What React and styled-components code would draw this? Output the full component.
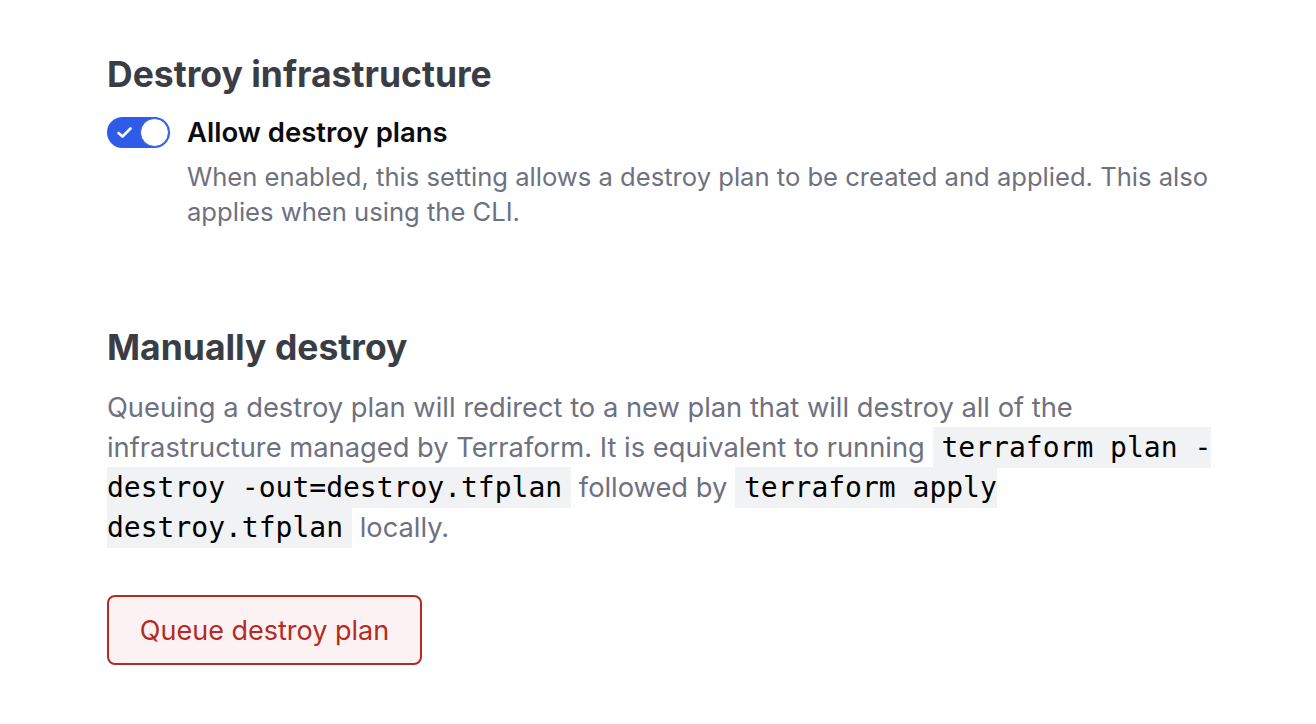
import React from "react";
import styled, { createGlobalStyle } from "styled-components";

const Global = createGlobalStyle`
  body {
    margin: 0;
    background: #fff;
    font-family: Inter, "Noto Sans", sans-serif;
  }
`;

const Page = styled.div`
  padding: 51px 0 0 107px;
  width: 1106px;
`;

const Heading = styled.h2`
  margin: 0;
  font-size: 35.5px;
  line-height: 48px;
  font-weight: 700;
  color: #3b3d45;
`;

const ToggleRow = styled.div`
  display: flex;
  gap: 17px;
  margin-top: 18px;
`;

const Switch = styled.div`
  flex: none;
  width: 63px;
  height: 31px;
  box-sizing: border-box;
  border-radius: 16px;
  background: #2e5be8;
  display: flex;
  align-items: center;
  justify-content: space-between;
  padding: 0 1px 0 9px;
`;

const Knob = styled.span`
  width: 29px;
  height: 29px;
  box-sizing: border-box;
  border-radius: 50%;
  border: 1.5px solid #2e5be8;
  background: #fff;
`;

const ToggleText = styled.div`
  display: flex;
  flex-direction: column;
`;

const Label = styled.div`
  font-size: 27.5px;
  line-height: 31px;
  font-weight: 600;
  color: #0c0c0e;
`;

const Description = styled.p`
  margin: 11px 0 0;
  font-size: 25.6px;
  line-height: 35px;
  color: #6e7180;
`;

const Section = styled.div`
  margin-top: ${(p) => p.$top}px;
`;

const Body = styled.p`
  margin: 16px 0 0;
  font-size: 27.3px;
  line-height: 40px;
  color: #6e7180;
`;

const Code = styled.code`
  font-family: "DejaVu Sans Mono", "Liberation Mono", monospace;
  font-size: 28px;
  line-height: 1;
  color: #000;
  background: #f1f2f4;
  padding: 4px 9px;
`;

const DangerButton = styled.button`
  display: block;
  margin-top: 47px;
  width: 315px;
  height: 70px;
  border: 2px solid #b42b22;
  border-radius: 8px;
  background: #fdf2f3;
  color: #b42b22;
  font-family: Inter, "Noto Sans", sans-serif;
  font-size: 27px;
  cursor: pointer;
`;

const Check = () => (
  <svg width="17" height="17" viewBox="0 0 17 17" fill="none">
    <path d="M2.5 9l4 3.5 8-8" stroke="#fff" strokeWidth="2.6" strokeLinecap="round" strokeLinejoin="round" />
  </svg>
);

export default function App() {
  return (
    <>
      <Global />
      <Page>
        <Heading>Destroy infrastructure</Heading>
        <ToggleRow>
          <Switch>
            <Check />
            <Knob />
          </Switch>
          <ToggleText>
            <Label>Allow destroy plans</Label>
            <Description>
              When enabled, this setting allows a destroy plan to be created and applied. This also
              applies when using the CLI.
            </Description>
          </ToggleText>
        </ToggleRow>
        <Section $top={95}>
          <Heading>Manually destroy</Heading>
          <Body>
            Queuing a destroy plan will redirect to a new plan that will destroy all of the
            infrastructure managed by Terraform. It is equivalent to running{" "}
            <Code>terraform plan -destroy -out=destroy.tfplan</Code> followed by{" "}
            <Code>terraform apply destroy.tfplan</Code> locally.
          </Body>
          <DangerButton>Queue destroy plan</DangerButton>
        </Section>
      </Page>
    </>
  );
}
